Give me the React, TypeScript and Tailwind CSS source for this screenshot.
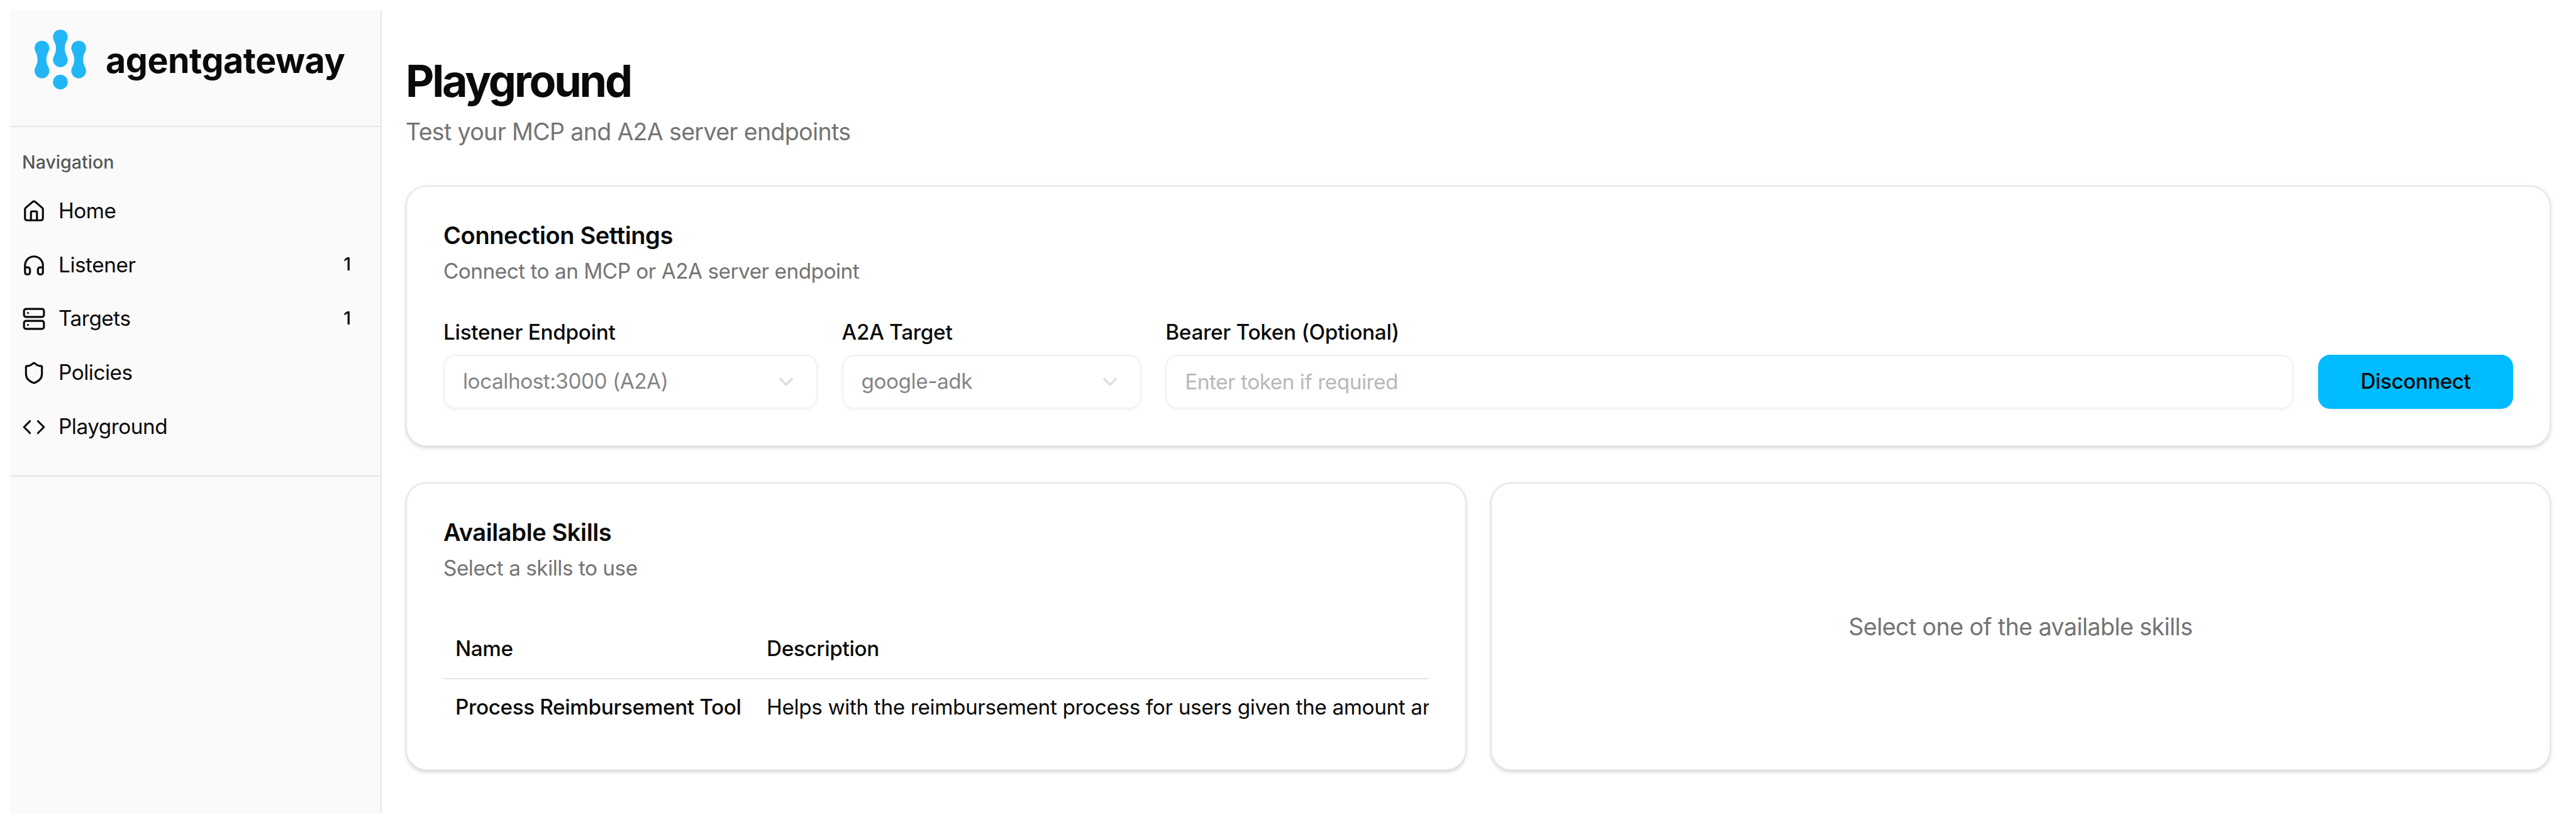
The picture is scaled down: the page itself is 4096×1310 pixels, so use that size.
import type { ReactNode } from "react";
import { ChevronDown, Code, Headphones, House, Server, Shield, type LucideIcon } from "lucide-react";

const NAV_ITEMS: { label: string; icon: LucideIcon; count?: number }[] = [
  { label: "Home", icon: House },
  { label: "Listener", icon: Headphones, count: 1 },
  { label: "Targets", icon: Server, count: 1 },
  { label: "Policies", icon: Shield },
  { label: "Playground", icon: Code },
];

const LINK =
  "M-10.3 5.65A11.75 11.75 0 1 1 10.3 5.65A26 26 0 0 0 10.3 30.65A11.75 11.75 0 1 1-10.3 30.65A26 26 0 0 0-10.3 5.65Z";

function Logo() {
  return (
    <div className="flex h-[184px] items-start pl-[38px] pt-[30px]">
      <svg viewBox="0 0 84 98" className="h-[98px] w-[84px] shrink-0" fill="#21b6f5">
        <path d={LINK} transform="translate(12.7 30.4)" />
        <path d={LINK} transform="translate(42 12.8)" />
        <path d={LINK} transform="translate(71.1 30.4)" />
        <circle cx="42" cy="84.5" r="11.75" />
      </svg>
      <span className="ml-[30px] mt-[16px] text-[55.5px] leading-[68px] font-bold tracking-[-0.45px] whitespace-nowrap">
        agentgateway
      </span>
    </div>
  );
}

function Sidebar() {
  return (
    <aside className="flex w-[591px] shrink-0 flex-col border-r-2 border-neutral-200 bg-neutral-50">
      <Logo />
      <div className="border-y-2 border-neutral-200 px-[19px] pt-[20px] pb-[39px]">
        <div className="flex h-[76px] items-center pb-[3px] text-[28.6px] font-medium text-[#0a0a0a]/70">Navigation</div>
        <nav className="flex flex-col gap-[9.6px]">
          {NAV_ITEMS.map(({ label, icon: Icon, count }) => (
            <a key={label} className="flex h-[76.1px] items-center gap-[20px] text-[33.3px] tracking-[-0.45px]">
              <Icon className="size-[38px] shrink-0" />
              <span className="grow">{label}</span>
              {count !== undefined && (
                <span className="w-[68px] pb-[2px] text-center text-[28.6px] font-medium">{count}</span>
              )}
            </a>
          ))}
        </nav>
      </div>
    </aside>
  );
}

function Card({ className, children }: { className: string; children: ReactNode }) {
  return (
    <section
      className={`rounded-[33px] border-2 border-neutral-200 bg-white shadow-[0_2.4px_7px_rgba(0,0,0,0.1),0_2.4px_4.8px_-2.4px_rgba(0,0,0,0.1)] ${className}`}
    >
      {children}
    </section>
  );
}

function CardHeader({ title, subtitle }: { title: string; subtitle: string }) {
  return (
    <header>
      <h2 className="text-[38px] leading-[38px] font-semibold tracking-[-0.38px]">{title}</h2>
      <p className="mt-[14px] text-[33.3px] leading-[48px] tracking-[-0.48px] text-neutral-500">{subtitle}</p>
    </header>
  );
}

function Field({ label, className, children }: { label: string; className: string; children: ReactNode }) {
  return (
    <label className={`flex flex-col gap-[19px] ${className}`}>
      <span className="text-[33.3px] leading-[33px] font-medium tracking-[-0.27px] whitespace-nowrap">{label}</span>
      {children}
    </label>
  );
}

function Select({ value }: { value: string }) {
  return (
    <div className="flex h-[86px] items-center justify-between rounded-[19px] border-2 border-neutral-200 px-[29px] text-[33.3px] tracking-[-0.45px] opacity-50 shadow-[0_2.4px_4.8px_rgba(0,0,0,0.05)]">
      <span>{value}</span>
      <ChevronDown className="size-[38px] text-neutral-500 opacity-50" />
    </div>
  );
}

export default function App() {
  return (
    <div className="flex h-[1310px] w-[4096px] overflow-hidden bg-white pt-[16px] pb-[17px] pl-[16px] font-['Inter',sans-serif] text-[#0a0a0a]">
      <Sidebar />
      <main className="flex grow flex-col pl-[38px] pr-[40px]">
        <h1 className="mt-[74px] text-[70px] leading-[78px] font-bold tracking-[-3.2px]">Playground</h1>
        <p className="mt-[14px] text-[37.5px] leading-[56px] tracking-[-0.64px] text-neutral-500">
          Test your MCP and A2A server endpoints
        </p>

        <Card className="mt-[57px] h-[415px] px-[58px] pt-[58px]">
          <CardHeader title="Connection Settings" subtitle="Connect to an MCP or A2A server endpoint" />
          <div className="mt-[57px] flex items-end gap-[38.6px]">
            <Field label="Listener Endpoint" className="w-[595px] shrink-0">
              <Select value="localhost:3000 (A2A)" />
            </Field>
            <Field label="A2A Target" className="w-[476px] shrink-0">
              <Select value="google-adk" />
            </Field>
            <Field label="Bearer Token (Optional)" className="grow">
              <input
                disabled
                placeholder="Enter token if required"
                className="h-[86px] w-full rounded-[19px] border-2 border-neutral-200 px-[29px] text-[33.3px] tracking-[-0.45px] opacity-50 shadow-[0_2.4px_4.8px_rgba(0,0,0,0.05)] placeholder:text-neutral-500"
              />
            </Field>
            <button className="h-[86px] w-[310px] shrink-0 rounded-[19px] bg-[#00bbff] text-[33.3px] font-medium tracking-[-0.5px] shadow-[0_2.4px_4.8px_rgba(0,0,0,0.05)]">
              Disconnect
            </button>
          </div>
        </Card>

        <div className="mt-[57px] grid h-[458px] grid-cols-2 gap-[38px]">
          <Card className="min-w-0 px-[58px] pt-[58px]">
            <CardHeader title="Available Skills" subtitle="Select a skills to use" />
            <div className="mt-[56px] overflow-hidden text-[33.3px] leading-[48px] tracking-[-0.36px] whitespace-nowrap">
              <div className="flex h-[97px] items-center border-b-2 border-neutral-200 font-medium">
                <span className="w-[495px] shrink-0 pl-[19px]">Name</span>
                <span className="pl-[19px]">Description</span>
              </div>
              <div className="flex h-[88px] items-center">
                <span className="w-[495px] shrink-0 pl-[19px] font-medium">Process Reimbursement Tool</span>
                <span className="pl-[19px]">
                  Helps with the reimbursement process for users given the amount and purpose of the reimbursement.
                </span>
              </div>
            </div>
          </Card>
          <Card className="flex items-center justify-center">
            <p className="pt-[2px] text-[37.5px] tracking-[-0.55px] text-neutral-500">Select one of the available skills</p>
          </Card>
        </div>
      </main>
    </div>
  );
}
